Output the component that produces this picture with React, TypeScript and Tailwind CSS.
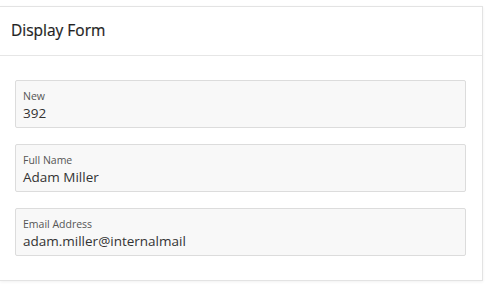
import React from "react";

const fields = [
  { label: "New", value: "392" },
  { label: "Full Name", value: "Adam Miller" },
  { label: "Email Address", value: "adam.miller@internalmail" },
];

export default function App() {
  return (
    <div
      className="w-[490px] h-[287px] bg-white pt-[6px] pr-[7px] pb-[6px]"
      style={{ fontFamily: '"Open Sans", "Noto Sans", sans-serif' }}
    >
      <div className="h-[275px] border border-l-0 border-[#e3e3e3] bg-white shadow-[0_1px_3px_rgba(0,0,0,0.06)]">
        <div className="h-[49px] border-b border-[#e6e6e6] pl-[11px] flex items-center">
          <h1 className="text-[15.5px] font-normal text-[#222] [-webkit-text-stroke:0.2px_#222]">
            Display Form
          </h1>
        </div>
        <div className="pt-[24px] pl-[15px] pr-[16px] flex flex-col gap-[16px]">
          {fields.map((f) => (
            <div
              key={f.label}
              className="h-[48px] border border-[#dcdcdc] bg-[#f8f8f8] rounded-[2px] pl-[7px] pt-[8px] flex flex-col"
            >
              <span className="text-[10.5px] leading-[14px] text-[#555]">{f.label}</span>
              <span className="text-[13.5px] leading-[20px] text-[#333]">{f.value}</span>
            </div>
          ))}
        </div>
      </div>
    </div>
  );
}
